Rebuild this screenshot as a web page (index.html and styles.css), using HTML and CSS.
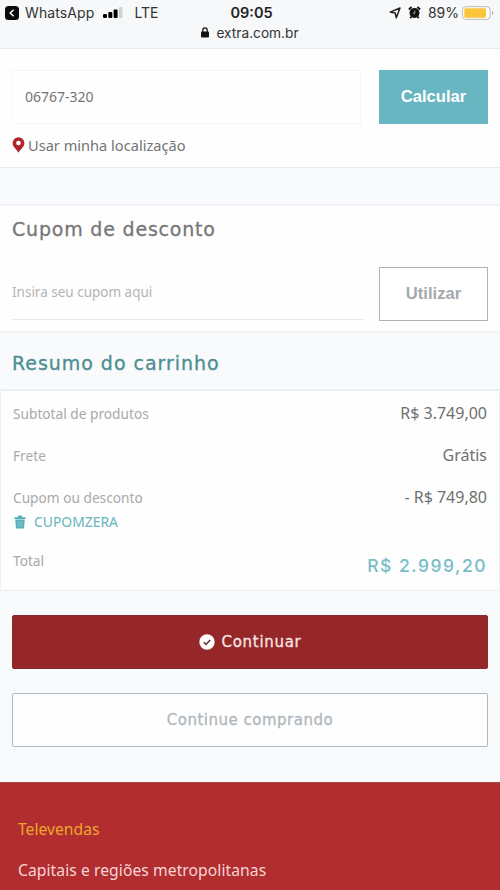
FILE: index.html
```html
<!DOCTYPE html>
<html lang="pt-BR">
<head>
<meta charset="utf-8">
<meta name="viewport" content="width=device-width, initial-scale=1">
<title>Carrinho</title>
<link rel="stylesheet" href="styles.css">
</head>
<body>
<header class="browser">
  <div class="status">
    <div class="status-left">
      <svg class="back" viewBox="0 0 14 14"><rect width="14" height="14" rx="3.5" fill="#0b0b0b"/><path d="M8.6 3.8 5.2 7l3.4 3.2" fill="none" stroke="#fff" stroke-width="1.5"/></svg>
      <span class="app">WhatsApp</span>
      <svg class="signal" viewBox="0 0 20 12"><rect x="0" y="7" width="4" height="4" rx="1.3"/><rect x="5.3" y="5" width="4" height="6" rx="1"/><rect x="10.6" y="2.5" width="4" height="8.5" rx="1"/><rect x="16" y="0" width="3.5" height="11" rx="1" fill="#cfd2d4"/></svg>
      <span class="lte">LTE</span>
    </div>
    <span class="clock">09:05</span>
    <div class="status-right">
      <svg class="arrow" viewBox="0 0 12 12"><path d="M11 1 7.3 10.8 6.2 6 1.2 5.1z" fill="none" stroke="#222" stroke-width="1.5" stroke-linejoin="round"/></svg>
      <svg class="alarm" viewBox="0 0 13 13"><circle cx="6.5" cy="7" r="5" fill="#111"/><path d="M.9 3.5 3.6 1M12.1 3.5 9.4 1M3.3 10.8 2.2 12M9.7 10.8l1.1 1.2" stroke="#111" stroke-width="1.9"/><path d="M6.8 4.5v2.8H4.8" fill="none" stroke="#c7cacc" stroke-width=".8"/></svg>
      <span class="percent">89%</span>
      <svg class="battery" viewBox="0 0 32 14"><rect x=".6" y=".7" width="27.5" height="12.6" rx="3.2" fill="#fff" stroke="#bdb9aa"/><rect x="2.3" y="2.3" width="21.7" height="9.4" rx="1.4" fill="#fac43c"/><path d="M30 5v4q1.2-.5 1.2-2T30 5z" fill="#a9a5ac"/></svg>
    </div>
  </div>
  <div class="address">
    <svg viewBox="0 0 8 11"><rect y="4.4" width="8" height="6.2" rx="1" fill="#111"/><path d="M1.8 5V3a2.2 2.2 0 0 1 4.4 0v2" fill="none" stroke="#111" stroke-width="1.2"/></svg>
    <span class="url">extra.com.br</span>
  </div>
</header>
<main>
  <section class="shipping">
    <div class="field-row">
      <div class="zip"><span>06767-320</span></div>
      <button class="btn calc"><span>Calcular</span></button>
    </div>
    <div class="locate">
      <svg viewBox="0 0 12 16"><path d="M6 .3A5.9 5.9 0 0 0 .1 6.2C.1 10 4.2 12.2 6 15.7 7.8 12.2 11.9 10 11.9 6.2A5.9 5.9 0 0 0 6 .3z" fill="#ae252b"/><circle cx="6" cy="6" r="2.3" fill="#fff"/></svg>
      <span class="locate-text">Usar minha localização</span>
    </div>
  </section>
  <section class="coupon">
    <h2><span>Cupom de desconto</span></h2>
    <div class="field-row">
      <div class="code"><span>Insira seu cupom aqui</span></div>
      <button class="btn use"><span>Utilizar</span></button>
    </div>
  </section>
  <h2 class="summary-title"><span>Resumo do carrinho</span></h2>
  <section class="summary">
    <div class="row"><span class="label">Subtotal de produtos</span><span class="value">R$ 3.749,00</span></div>
    <div class="row"><span class="label">Frete</span><span class="value">Grátis</span></div>
    <div class="row discount"><span class="label">Cupom ou desconto</span><span class="value">- R$ 749,80</span></div>
    <div class="tag">
      <svg viewBox="0 0 12 14"><path d="M.5 2.3h3L4.300.6h3.400l.8 1.700h3v1.600H.5z" fill="#5bafbb"/><path d="M1.200 4.400h9.600l-.8 9.200H2z" fill="#5bafbb"/><path d="M4 6v6M6 6v6M8 6v6" stroke="#b3dce1" stroke-width=".5"/></svg>
      <span class="tag-text">CUPOMZERA</span>
    </div>
    <div class="row total"><span class="label">Total</span><span class="sum">R$ 2.999,20</span></div>
  </section>
  <div class="actions">
    <button class="btn go">
      <svg viewBox="0 0 16 16"><circle cx="8" cy="8" r="7.7" fill="#fff"/><path d="m4.800 8.200 2.200 2.200 4.200-4.500" fill="none" stroke="#643033" stroke-width="1.500"/></svg>
      <span>Continuar</span>
    </button>
    <button class="btn keep"><span>Continue comprando</span></button>
  </div>
</main>
<footer>
  <span class="tele">Televendas</span>
  <span class="cap">Capitais e regiões metropolitanas</span>
</footer>
</body>
</html>
```
FILE: styles.css
```css
* { box-sizing: border-box; }
body { margin: 0; height: 890px; overflow: hidden; display: flex; flex-direction: column; background: #f8fafc; font-family: "Noto Sans", "Open Sans", sans-serif; color: #757575; }
svg { display: block; flex: none; }
span { white-space: nowrap; }
.browser { height: 49px; flex: none; background: #f6f8f9; border-bottom: 1px solid #e9ecee; font-family: Inter, sans-serif; color: #333; }
.status { height: 24px; padding: 1px 6px 0 5px; display: grid; grid-template-columns: 1fr auto 1fr; align-items: center; font-size: 14px; }
.status-left, .status-right { display: flex; align-items: center; }
.status-right { justify-content: flex-end; }
.back { width: 14px; height: 14px; margin-right: 6px; }
.app { letter-spacing: .1px; }
.signal { width: 20px; height: 12px; margin: 0 11px 0 9px; }
.clock { font-weight: 600; color: #222; font-size: 14.5px; padding-left: 4px; }
.arrow { width: 12px; height: 12px; margin-right: 7px; }
.alarm { width: 13px; height: 13px; margin-right: 7px; }
.battery { width: 32px; height: 14px; margin-left: 3px; }
.address { height: 17px; display: flex; align-items: center; justify-content: center; gap: 7px; font-size: 13.7px; }
.address svg { width: 8px; height: 11px; }
.shipping { height: 119px; padding: 21px 12px 0; background: #fefefe; border-bottom: 1px solid #e8eaed; }
.field-row { display: grid; grid-template-columns: 349px 109px; justify-content: space-between; height: 54px; }
.zip { border: 1px solid #f5f5f5; display: flex; align-items: center; padding: 0 0 2px 12px; font-size: 14px; }
.btn { margin: 0; padding: 0; display: flex; align-items: center; justify-content: center; font-family: "Liberation Sans", sans-serif; font-weight: bold; font-size: 16.6px; }
.calc { border: 0; background: #67b6c1; color: #fff; }
.locate { display: flex; align-items: center; height: 24px; margin-top: 9px; gap: 3px; font-size: 14.6px; }
.locate svg { width: 13px; height: 16px; }
.coupon { height: 129px; margin-top: 36px; padding: 0 12px; background: #fefefe; border-top: 2px solid #f2f2f7; border-bottom: 2px solid #f3f4f8; }
h2 { margin: 0; height: 61px; padding-top: 8px; font: 400 19px/30px "DejaVu Sans", sans-serif; letter-spacing: .8px; color: #777; -webkit-text-stroke: .3px currentColor; }
.coupon .field-row { grid-template-columns: 351px 109px; height: 54px; }
.code { height: 53px; border-bottom: 1px solid #e7e7e9; display: flex; align-items: center; padding-bottom: 2px; font-size: 13.5px; color: #b4b4b4; }
.use { background: #fff; border: 1px solid #afb3b6; color: #a5a9ad; }
.summary-title { height: 56px; padding: 15px 12px 0; color: #4c8e90; letter-spacing: .96px; }
.summary { height: 202px; padding: 1px 12px; background: #fefefe; border: 1px solid #edf0f3; border-top-width: 2px; }
.row { height: 42px; display: flex; align-items: center; justify-content: space-between; font-size: 13.7px; color: #a9a9a9; }
.value { font-size: 16px; color: #707070; }
.discount { height: 38px; padding-top: 4px; }
.tag { display: flex; align-items: center; height: 15px; gap: 8px; padding-left: 1px; font-size: 13.9px; color: #67b5bd; }
.tag svg { width: 12px; height: 14px; }
.total { height: 54px; align-items: flex-start; padding-top: 22px; }
.sum { font: 500 17.5px/30px Inter, sans-serif; letter-spacing: 1.5px; color: #78bdc8; }
.actions { padding: 24px 12px 0; display: grid; grid-template-rows: 54px 54px; gap: 24px; }
.actions .btn { font-family: "DejaVu Sans", sans-serif; font-size: 15px; letter-spacing: .5px; border-radius: 2px; font-weight: normal; -webkit-text-stroke: .3px currentColor; }
.actions .go { background: #962729; color: #f8e4e4; border: 1px solid #84292c; gap: 7px; letter-spacing: .7px; }
.go svg { width: 16px; height: 16px; }
.actions .keep { background: #fefefe; color: #afb7bd; border: 1px solid #b2b8be; padding-bottom: 1px; }
footer { margin-top: auto; height: 108px; padding: 26px 18px 0; display: flex; flex-direction: column; background: #b12d2f; border-top: 1px solid #a34749; font-size: 15.7px; color: #f6d5d5; flex: none; }
footer span { height: 41px; line-height: 41px; }
.cap { letter-spacing: .05px; }
.tele { color: #eba72d; }
```
